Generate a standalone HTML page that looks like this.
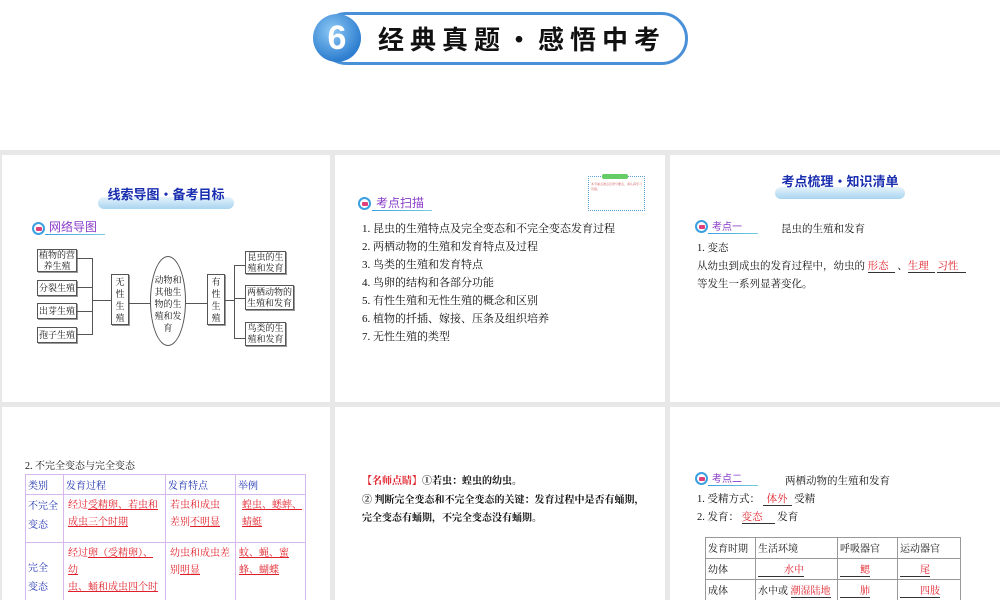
<!DOCTYPE html>
<html><head><meta charset="utf-8"><style>
*{margin:0;padding:0;box-sizing:border-box}
html{overflow:hidden;width:1000px;height:600px}
body{width:1000px;height:600px;background:#fff;position:relative;overflow:hidden;font-family:"Liberation Serif","Noto Serif CJK SC","Noto Sans CJK SC",serif;color:#111}
.bg{position:absolute;left:0;top:150px;width:1000px;height:450px;background:#e8e8e8}
.p{position:absolute;background:#fff;overflow:hidden}
.a{position:absolute;white-space:nowrap}
.bx{position:absolute;border:1px solid #555;background:#fff;font-size:9px;line-height:11px;text-align:center;display:flex;align-items:center;justify-content:center;box-shadow:1px 1px 0 #999}
.ln{position:absolute;background:#555}
.ttl{position:absolute;font-family:"Noto Sans CJK SC",sans-serif;font-weight:bold;color:#1a2fb0;font-size:13px;white-space:nowrap;text-align:center}
.cloud{position:absolute;height:12px;border-radius:6px;background:linear-gradient(#e6f3fc,#a8d4f0)}
.tag{position:absolute;font-family:"Noto Sans CJK SC",sans-serif;color:#8a3cc8;white-space:nowrap}
.ico{position:absolute;width:13px;height:13px;border-radius:50%;border:2px solid #3aa0e0;background:#fff}
.ico:after{content:"";position:absolute;left:2px;top:3px;width:6px;height:4px;background:#e0407a;border-radius:1px}
.ul{position:absolute;height:1px;background:linear-gradient(90deg,#3aa0e0,#7cd);}
.r{color:#e0202a}
.f11{font-size:10.5px}
table{border-collapse:collapse;position:absolute}
td{font-size:10px;vertical-align:top;padding:2px}
</style></head><body>
<!-- banner -->
<div class="a" style="left:320px;top:12px;width:368px;height:53px;border:3px solid #4a90d8;border-radius:27px;background:#fff"></div>
<div class="a" style="left:313px;top:14px;width:48px;height:48px;border-radius:50%;background:radial-gradient(circle at 40% 35%,#8cc8f5,#2f7fd0 70%);color:#fff;font:bold 34px/48px 'Liberation Sans',sans-serif;text-align:center">6</div>
<div class="a" style="left:378px;top:21px;font:bold 26px/36px 'Noto Sans CJK SC',sans-serif;letter-spacing:6px;color:#111">经典真题·感悟中考</div>

<div class="bg"></div>
<div class="p" style="left:2px;top:155px;width:328px;height:247px"></div>
<div class="p" style="left:335px;top:155px;width:330px;height:247px"></div>
<div class="p" style="left:670px;top:155px;width:330px;height:247px"></div>
<div class="p" style="left:2px;top:407px;width:328px;height:193px"></div>
<div class="p" style="left:335px;top:407px;width:330px;height:193px"></div>
<div class="p" style="left:670px;top:407px;width:330px;height:193px"></div>

<!-- panel 1 -->
<div class="cloud" style="left:98px;top:197px;width:136px"></div>
<div class="ttl" style="left:98px;top:184px;width:136px">线索导图·备考目标</div>
<div class="ico" style="left:32px;top:222px"></div>
<div class="tag" style="left:49px;top:218px;font-size:12px">网络导图</div>
<div class="ul" style="left:45px;top:234px;width:60px"></div>
<div class="bx" style="left:37px;top:249px;width:40px;height:23px">植物的营<br>养生殖</div>
<div class="bx" style="left:37px;top:280px;width:40px;height:16px">分裂生殖</div>
<div class="bx" style="left:37px;top:303px;width:40px;height:16px">出芽生殖</div>
<div class="bx" style="left:37px;top:327px;width:40px;height:16px">孢子生殖</div>
<div class="ln" style="left:92px;top:258px;width:1px;height:77px"></div>
<div class="ln" style="left:77px;top:258px;width:15px;height:1px"></div>
<div class="ln" style="left:77px;top:287px;width:15px;height:1px"></div>
<div class="ln" style="left:77px;top:311px;width:15px;height:1px"></div>
<div class="ln" style="left:77px;top:334px;width:15px;height:1px"></div>
<div class="ln" style="left:92px;top:300px;width:19px;height:1px"></div>
<div class="bx" style="left:111px;top:274px;width:18px;height:51px;line-height:12px">无<br>性<br>生<br>殖</div>
<div class="ln" style="left:129px;top:303px;width:21px;height:1px"></div>
<div class="a" style="left:150px;top:256px;width:36px;height:90px;border:1px solid #555;border-radius:50%;font-size:9px;line-height:12px;text-align:center;padding-top:17px">动物和<br>其他生<br>物的生<br>殖和发<br>育</div>
<div class="ln" style="left:186px;top:303px;width:21px;height:1px"></div>
<div class="bx" style="left:207px;top:274px;width:18px;height:51px;line-height:12px">有<br>性<br>生<br>殖</div>
<div class="ln" style="left:225px;top:300px;width:9px;height:1px"></div>
<div class="ln" style="left:234px;top:265px;width:1px;height:74px"></div>
<div class="ln" style="left:234px;top:265px;width:11px;height:1px"></div>
<div class="ln" style="left:234px;top:298px;width:11px;height:1px"></div>
<div class="ln" style="left:234px;top:338px;width:11px;height:1px"></div>
<div class="bx" style="left:245px;top:251px;width:41px;height:23px">昆虫的生<br>殖和发育</div>
<div class="bx" style="left:245px;top:285px;width:49px;height:25px">两栖动物的<br>生殖和发育</div>
<div class="bx" style="left:245px;top:322px;width:41px;height:24px">鸟类的生<br>殖和发育</div>

<!-- panel 2 -->
<div class="a" style="left:588px;top:176px;width:57px;height:35px;border:1px dotted #5aa0d0;font-size:3px;color:#c55;padding:5px 2px;line-height:5px;white-space:normal">本节重点难点及得分要点，请认真学习巩固。</div>
<div class="a" style="left:602px;top:174px;width:26px;height:5px;background:#6c6;border-radius:2px"></div>
<div class="ico" style="left:358px;top:197px"></div>
<div class="tag" style="left:376px;top:194px;font-size:12px">考点扫描</div>
<div class="ul" style="left:372px;top:210px;width:60px"></div>
<div class="a" style="left:362px;top:220px;line-height:18px;font-size:11px">1. 昆虫的生殖特点及完全变态和不完全变态发育过程<br>2. 两栖动物的生殖和发育特点及过程<br>3. 鸟类的生殖和发育特点<br>4. 鸟卵的结构和各部分功能<br>5. 有性生殖和无性生殖的概念和区别<br>6. 植物的扦插、嫁接、压条及组织培养<br>7. 无性生殖的类型</div>

<!-- panel 3 -->
<div class="cloud" style="left:775px;top:187px;width:130px"></div>
<div class="ttl" style="left:775px;top:171px;width:130px">考点梳理·知识清单</div>
<div class="ico" style="left:695px;top:220px"></div>
<div class="tag" style="left:712px;top:218px;font-size:10px">考点一</div>
<div class="ul" style="left:708px;top:233px;width:50px"></div>
<div class="a f11" style="left:781px;top:221px">昆虫的生殖和发育</div>
<div class="a f11" style="left:697px;top:240px">1. 变态</div>
<div class="a f11" style="left:697px;top:258px">从幼虫到成虫的发育过程中，幼虫的 <span class="r" style="border-bottom:1px solid #333;padding-right:6px">形态</span> 、<span class="r" style="border-bottom:1px solid #333;padding-right:6px">生理</span> <span class="r" style="border-bottom:1px solid #333;padding-right:8px">习性</span></div>
<div class="a f11" style="left:697px;top:276px">等发生一系列显著变化。</div>

<!-- panel 4 -->
<div class="a" style="left:25px;top:457px;font-size:10px">2. 不完全变态与完全变态</div>
<table style="left:25px;top:474px;width:281px;border:1px solid #c9a0e0">
<tr style="height:18px;color:#1a2fb0"><td style="border:1px solid #d8b8ec;width:38px">类别</td><td style="border:1px solid #d8b8ec;width:102px">发育过程</td><td style="border:1px solid #d8b8ec;width:70px">发育特点</td><td style="border:1px solid #d8b8ec">举例</td></tr>
<tr style="height:48px"><td style="border:1px solid #d8b8ec;color:#1a2fb0;line-height:19px">不完全<br>变态</td><td style="border:1px solid #d8b8ec;color:#e0202a;line-height:17px;padding-left:4px">经过<u>受精卵、若虫和<br>成虫三个时期</u></td><td style="border:1px solid #d8b8ec;color:#e0202a;line-height:17px;padding-left:4px">若虫和成虫<br>差别<u>不明显</u></td><td style="border:1px solid #d8b8ec;color:#e0202a;line-height:17px;padding-left:6px"><u>蝗虫、蟋蟀、<br>蜻蜓</u></td></tr>
<tr style="height:70px"><td style="border:1px solid #d8b8ec;color:#1a2fb0;line-height:19px;vertical-align:middle">完全<br>变态</td><td style="border:1px solid #d8b8ec;color:#e0202a;line-height:17px;padding-left:4px">经过<u>卵（受精卵）、<br>幼<br>虫、蛹和成虫四个时</u></td><td style="border:1px solid #d8b8ec;color:#e0202a;line-height:17px;padding-left:4px">幼虫和成虫差<br>别<u>明显</u></td><td style="border:1px solid #d8b8ec;color:#e0202a;line-height:17px;padding-left:3px"><u>蚊、蝇、蜜<br>蜂、蝴蝶</u></td></tr>
</table>

<!-- panel 5 -->
<div class="a" style="left:362px;top:473px;font-size:10px;line-height:18.5px;font-weight:bold"><span class="r">【名师点睛】</span>①若虫：蝗虫的幼虫。<br>② 判断完全变态和不完全变态的关键：发育过程中是否有蛹期，<br>完全变态有蛹期，不完全变态没有蛹期。</div>

<!-- panel 6 -->
<div class="ico" style="left:695px;top:472px"></div>
<div class="tag" style="left:712px;top:470px;font-size:10px">考点二</div>
<div class="ul" style="left:708px;top:485px;width:50px"></div>
<div class="a f11" style="left:785px;top:473px">两栖动物的生殖和发育</div>
<div class="a f11" style="left:697px;top:491px">1. 受精方式： <span class="r" style="border-bottom:1px solid #333;padding:0 4px">体外</span> 受精</div>
<div class="a f11" style="left:697px;top:509px">2. 发育： <span class="r" style="border-bottom:1px solid #333;padding-right:12px">变态</span> 发育</div>
<table style="left:705px;top:537px;width:256px;border:1px solid #777">
<tr style="height:21px"><td style="border:1px solid #999;width:50px">发育时期</td><td style="border:1px solid #999;width:82px">生活环境</td><td style="border:1px solid #999;width:60px">呼吸器官</td><td style="border:1px solid #999">运动器官</td></tr>
<tr style="height:21px"><td style="border:1px solid #999">幼体</td><td style="border:1px solid #999"><span class="r" style="border-bottom:1px solid #333;padding-left:26px">水中</span></td><td style="border:1px solid #999"><span class="r" style="border-bottom:1px solid #333;padding-left:20px">鳃</span></td><td style="border:1px solid #999"><span class="r" style="border-bottom:1px solid #333;padding-left:20px">尾</span></td></tr>
<tr style="height:21px"><td style="border:1px solid #999">成体</td><td style="border:1px solid #999">水中或 <span class="r" style="border-bottom:1px solid #333">潮湿陆地</span></td><td style="border:1px solid #999"><span class="r" style="border-bottom:1px solid #333;padding-left:20px">肺</span></td><td style="border:1px solid #999"><span class="r" style="border-bottom:1px solid #333;padding-left:20px">四肢</span></td></tr>
</table>
</body></html>
